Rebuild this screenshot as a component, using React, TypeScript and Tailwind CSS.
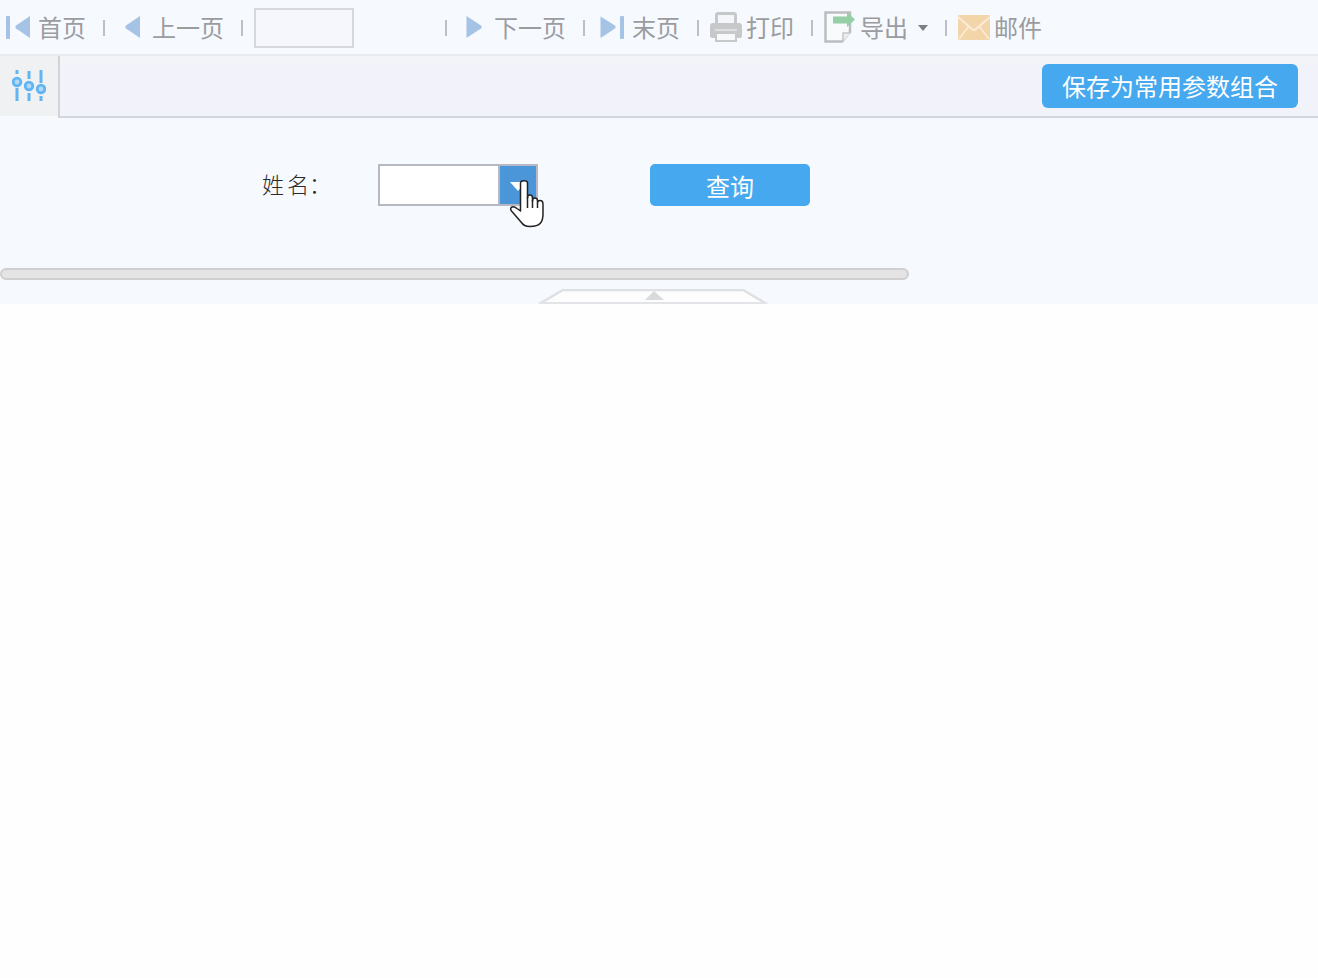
import React from "react";

const font = { fontFamily: '"Noto Sans CJK SC", "Noto Sans", sans-serif' };

function Sep({ className = "" }: { className?: string }) {
  return <span className={`h-[16px] w-[2px] shrink-0 bg-[#bcbfc4] mt-[1px] ${className}`} />;
}

function Label({ children, className = "" }: { children: React.ReactNode; className?: string }) {
  return (
    <span className={`-mt-[1px] text-[24px] leading-[30px] font-normal text-[#9a9c9f] whitespace-nowrap shrink-0 ${className}`}>
      {children}
    </span>
  );
}

const blue = "#a5c4e5";

function First() {
  return (
    <svg width="26" height="26" viewBox="0 0 26 26" className="shrink-0">
      <rect x="0" y="2" width="4" height="23" rx="1" fill={blue} />
      <path d="M24 2 L24 24 L10 14.5 Q8.5 13 10 11.5 Z" fill={blue} />
    </svg>
  );
}
function Prev() {
  return (
    <svg width="16" height="26" viewBox="0 0 16 26" className="shrink-0">
      <path d="M15 2 L15 24 L1 14.5 Q-0.5 13 1 11.5 Z" fill={blue} />
    </svg>
  );
}
function Next() {
  return (
    <svg width="16" height="26" viewBox="0 0 16 26" className="shrink-0">
      <path d="M0.5 2 L0.5 24 L15 14.5 Q16.5 13 15 11.5 Z" fill={blue} />
    </svg>
  );
}
function Last() {
  return (
    <svg width="26" height="26" viewBox="0 0 26 26" className="shrink-0">
      <path d="M0.5 2.5 L0.5 24 L15 14.5 Q16.5 13 15 11.5 Z" fill={blue} />
      <rect x="20" y="2" width="4" height="23" rx="1" fill={blue} />
    </svg>
  );
}
function Printer() {
  return (
    <svg width="32" height="30" viewBox="0 0 32 30" className="shrink-0">
      <path d="M6.5 13 V3 Q6.5 1.5 8 1.5 H24 Q25.5 1.5 25.5 3 V13" fill="#f5f6f9" stroke="#c6c8ca" strokeWidth="3" />
      <path d="M3 11 H29 Q32 11 32 14 V24 Q32 26 29 26 H3 Q0 26 0 24 V14 Q0 11 3 11 Z" fill="#c6c8ca" />
      <path d="M5 18 H27" stroke="#f5f6f9" strokeWidth="1" />
      <rect x="6" y="21" width="20" height="8" fill="#f7f8fa" stroke="#c6c8ca" strokeWidth="2" />
    </svg>
  );
}
function ExportIcon() {
  return (
    <svg width="32" height="32" viewBox="0 0 32 32" className="shrink-0">
      <path d="M1.5 1.5 H26 V21 L18 30.5 H1.5 Z" fill="#f9fafb" stroke="#bcbdc0" strokeWidth="2.5" />
      <path d="M19 30 V22 H27" fill="#eceded" stroke="#c6c7c9" strokeWidth="1.5" />
      <path d="M9 5.5 H23 V1 L31 8.5 L23 16 V12.5 H9 Z" fill="#94cfa6" />
    </svg>
  );
}
function Mail() {
  return (
    <svg width="32" height="26" viewBox="0 0 32 26" className="shrink-0">
      <rect x="0" y="1" width="32" height="25" rx="1" fill="#f3d5aa" />
      <path d="M0 3 L14 15 Q16 17 18 15 L32 3" fill="none" stroke="#fbecd8" strokeWidth="2" />
      <path d="M1 25 L11 12 M31 25 L21 12" fill="none" stroke="#fbecd8" strokeWidth="1.5" />
    </svg>
  );
}
function Sliders() {
  return (
    <svg width="34" height="34" viewBox="0 0 34 34" className="shrink-0">
      <g stroke="#62b5f3" strokeWidth="3" fill="none">
        <path d="M5 1 V5 M5 19 V32" />
        <path d="M17 2 V10 M17 24 V32" />
        <path d="M29 1 V14 M29 27 V32" />
        <circle cx="5" cy="13" r="3.8" strokeWidth="2.8" fill="#b4d9f6" />
        <circle cx="17" cy="17" r="3.8" strokeWidth="2.8" fill="#b4d9f6" />
        <circle cx="29" cy="20" r="3.8" strokeWidth="2.8" fill="#b4d9f6" />
      </g>
    </svg>
  );
}
function Hand() {
  return (
    <svg width="36" height="48" viewBox="0 0 36 48" className="absolute left-[509px] top-[180px]">
      <path
        d="M11.5 3 Q11.5 0.8 15 0.8 Q18.5 0.8 18.5 3 V18 Q18.5 15 21 15 Q23.5 15 23.5 18 V21 Q23.5 18 26 18 Q28.5 18 28.5 21 V23 Q28.5 20.5 31 20.5 Q34 20.5 34 24 V34 Q34 40 31.5 43 Q28.5 46.5 21 46.5 Q15 46.5 12 42 L2.5 31 Q0.5 28.5 3 27 Q5 26 8 28.5 L11.5 31 Z"
        fill="#fff"
        stroke="#222"
        strokeWidth="1.5"
        strokeLinejoin="round"
      />
      <path d="M18.5 17 V28 M23.5 20 V28 M28.5 23 V28" stroke="#222" strokeWidth="1.5" fill="none" />
    </svg>
  );
}

export default function App() {
  return (
    <div className="relative min-h-[978px] bg-[#fefefe]" style={font}>
      <div className="bg-[#f6f9fe]">
        {/* toolbar */}
        <div className="flex h-[56px] items-center border-b-2 border-[#e9ebee] pl-[6px]">
          <First />
          <Label className="ml-[6px]">首页</Label>
          <Sep className="ml-[17px]" />
          <span className="ml-[20px]"><Prev /></span>
          <Label className="ml-[11px]">上一页</Label>
          <Sep className="ml-[17px]" />
          <input className="ml-[11px] mt-[2px] h-[40px] w-[100px] shrink-0 border-2 border-[#d6d8de] bg-[#f6f7fc]" />
          <Sep className="ml-[91px]" />
          <span className="ml-[19px]"><Next /></span>
          <Label className="ml-[12px]">下一页</Label>
          <Sep className="ml-[17px]" />
          <span className="ml-[15px]"><Last /></span>
          <Label className="ml-[6px]">末页</Label>
          <Sep className="ml-[17px]" />
          <span className="ml-[11px]"><Printer /></span>
          <Label className="ml-[4px]">打印</Label>
          <Sep className="ml-[17px]" />
          <span className="ml-[11px]"><ExportIcon /></span>
          <Label className="ml-[4px]">导出</Label>
          <span className="ml-[10px] mt-[2px] h-0 w-0 border-x-[5.5px] border-t-[6px] border-x-transparent border-t-[#7c7f84]" />
          <Sep className="ml-[17px]" />
          <span className="ml-[11px]"><Mail /></span>
          <Label className="ml-[4px]">邮件</Label>
        </div>

        {/* parameter bar */}
        <div className="flex h-[62px]">
          <div className="flex h-[60px] w-[58px] shrink-0 items-center justify-center bg-[#f0f1f3]">
            <Sliders />
          </div>
          <div className="w-[2px] shrink-0 bg-[#d2d3d6]" />
          <div className="flex flex-1 flex-col border-b-2 border-[#d3d6dc] bg-[#f1f2fa]">
            <div className="h-[8px] bg-[#f3f4f8]" />
            <div className="flex justify-end pr-[20px]">
              <button className="h-[44px] w-[256px] rounded-[6px] bg-[#46a8ee] text-[24px] leading-[44px] text-white">
                保存为常用参数组合
              </button>
            </div>
          </div>
        </div>

        {/* query form */}
        <div className="flex items-center pl-[262px] pt-[46px]">
          <span className="-mt-[4px] w-[116px] shrink-0 whitespace-nowrap text-[22px] font-light leading-[42px] text-[#2a2a2a]">
            <span className="tracking-[3px]">姓</span>名：
          </span>
          <div className="flex h-[42px] w-[160px] shrink-0 border-2 border-[#b6b9c4] bg-white">
            <div className="flex-1 border-r-2 border-[#b6b9c4]" />
            <div className="flex w-[36px] items-center justify-center bg-[#4a96d8]">
              <span className="mt-[2px] h-0 w-0 border-x-[8px] border-t-[9px] border-x-transparent border-t-white" />
            </div>
          </div>
          <button className="ml-[112px] h-[42px] w-[160px] rounded-[5px] bg-[#46a8ee] text-[24px] leading-[44px] text-white">
            查询
          </button>
        </div>

        {/* scrollbar */}
        <div className="mt-[62px] h-[12px] w-[909px] rounded-full border-2 border-[#cfcfcf] bg-[#e4e4e4]" />

        {/* collapse handle */}
        <div className="flex h-[24px] pl-[538px] pt-[9px]">
          <svg width="230" height="15" viewBox="0 0 230 15" className="shrink-0">
            <path d="M1 15 L25 1 H205 L229 15" fill="#fdfdfe" stroke="#dfe0e3" strokeWidth="2.5" />
            <path d="M1 14 H229" stroke="#e3e4e7" strokeWidth="2" />
            <path d="M107 11 L116 2 L126 11 Z" fill="#d9dadc" />
          </svg>
        </div>
      </div>
      <Hand />
    </div>
  );
}
